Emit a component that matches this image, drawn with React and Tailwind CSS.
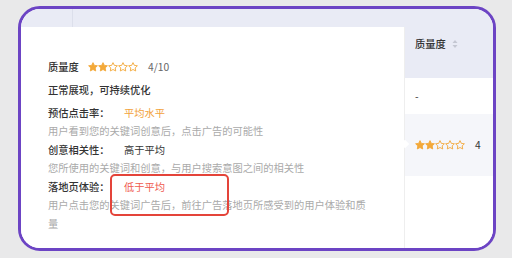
import React from "react";

const FONT = { fontFamily: '"Noto Sans CJK SC", "Noto Sans", sans-serif' };

function Star({ filled, size = 10 }) {
  return (
    <svg width={size} height={size} viewBox="0 0 24 24" className="shrink-0">
      <path
        d="M12 1.5l3.2 6.6 7.3 1-5.3 5.1 1.3 7.3L12 18l-6.5 3.5 1.3-7.3-5.3-5.1 7.3-1z"
        fill={filled ? "#f3a93a" : "none"}
        stroke="#f3a93a"
        strokeWidth={2.2}
        strokeLinejoin="round"
      />
    </svg>
  );
}

function Stars({ n = 2 }) {
  return (
    <div className="flex items-center gap-[0px]">
      {[0, 1, 2, 3, 4].map((i) => (
        <Star key={i} filled={i < n} />
      ))}
    </div>
  );
}

function Row({ label, value, valueClass }) {
  return (
    <div className="flex">
      <span className="w-[76px] font-medium text-[#333]">{label}</span>
      <span className={valueClass}>{value}</span>
    </div>
  );
}

export default function App() {
  return (
    <div
      className="w-[512px] h-[258px] bg-[#e9e9ea] pt-[6px] pl-[18px]"
      style={FONT}
    >
      <div className="w-[478px] h-[245px] border-[3px] border-[#6c44c4] rounded-[22px] overflow-hidden bg-white flex">
        {/* left side with popover */}
        <div className="w-[384px] flex flex-col relative">
          <div className="h-[18px] bg-[#e9ebf5] flex shrink-0">
            <div className="w-[52px] border-r border-[#dcdfeb]" />
          </div>
          <div className="flex-1 bg-white border-r border-[#eeeeee] pl-[27px] pt-[28px] text-[10.25px] relative">
            <div className="flex items-center h-[23px] leading-[23px]">
              <span className="font-medium text-[#333] w-[40px]">质量度</span>
              <Stars n={2} />
              <span className="ml-[10px] text-[#666]">4/10</span>
            </div>
            <div className="h-[23px] leading-[23px] font-medium text-[#333]">
              正常展现，可持续优化
            </div>
            <div className="mt-[2.5px] leading-[18.6px] w-[322px]">
              <Row label="预估点击率：" value="平均水平" valueClass="text-[#f2a23a]" />
              <div className="text-[#aaaaaa]">
                用户看到您的关键词创意后，点击广告的可能性
              </div>
              <Row label="创意相关性：" value="高于平均" valueClass="text-[#333]" />
              <div className="text-[#aaaaaa]">
                您所使用的关键词和创意，与用户搜索意图之间的相关性
              </div>
              <Row label="落地页体验：" value="低于平均" valueClass="text-[#ef5b4f]" />
              <div className="text-[#aaaaaa]">
                用户点击您的关键词广告后，前往广告落地页所感受到的用户体验和质量
              </div>
            </div>
            {/* red annotation box */}
            <div className="absolute left-[89px] top-[147px] w-[119px] h-[42px] border-2 border-[#e4443a] rounded-[5px]" />
          </div>
          {/* popover arrow */}
          <div className="absolute right-[-3px] top-[132px] w-[6px] h-[6px] bg-white rotate-45 z-10" />
        </div>
        {/* right column */}
        <div className="flex-1 flex flex-col">
          <div className="h-[69px] bg-[#e9ebf5] flex items-center pl-[10px] shrink-0">
            <span className="text-[10.25px] font-medium text-[#333]">质量度</span>
            <svg width="6" height="10" viewBox="0 0 6 10" className="ml-[6px]">
              <path d="M3 1l2.5 3h-5z" fill="#c4c7d2" />
              <path d="M3 9l2.5-3h-5z" fill="#c4c7d2" />
            </svg>
          </div>
          <div className="h-[36px] bg-white flex items-center pl-[10px] text-[10.25px] text-[#333] shrink-0">
            -
          </div>
          <div className="h-[62px] bg-[#f5f6fa] flex items-center pl-[10px] shrink-0">
            <Stars n={2} />
            <span className="ml-[10px] text-[10.25px] text-[#333]">4</span>
          </div>
          <div className="flex-1 bg-white" />
        </div>
      </div>
    </div>
  );
}
